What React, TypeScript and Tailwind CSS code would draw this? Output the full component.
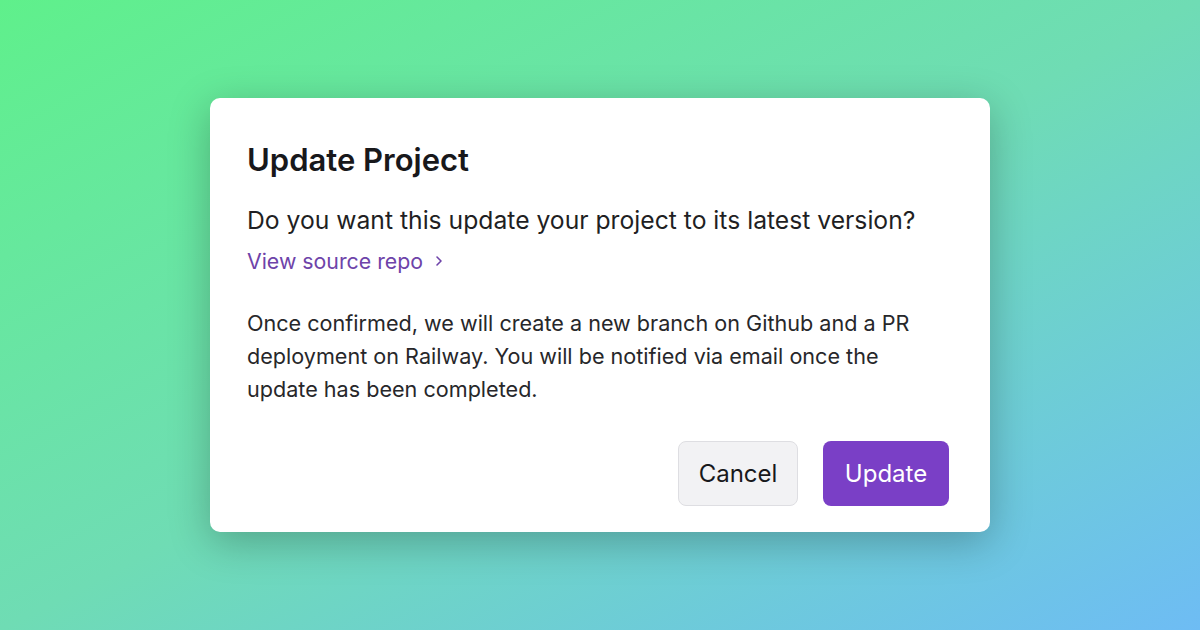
export default function App() {
  return (
    <div
      className="w-[1200px] h-[630px] flex items-center justify-center bg-gradient-to-br from-[#5ff08b] via-[#6fdcb4] to-[#6ebcf4]"
      style={{ fontFamily: "Inter, 'Noto Sans', sans-serif" }}
    >
      <div className="w-[780px] h-[434px] bg-white rounded-[10px] shadow-[0_10px_40px_rgba(0,0,0,0.25)] pl-[37px] pr-[41px] pt-[42px] pb-[26px] flex flex-col">
        <h1 className="text-[31px] leading-[40px] font-semibold text-[#18181b]">Update Project</h1>
        <p className="mt-[23px] text-[24.7px] leading-[34px] text-[#1f1f23]">
          Do you want this update your project to its latest version?
        </p>
        <a className="mt-[10px] flex items-center gap-[11px] text-[21.3px] leading-[28px] text-[#6e43a9]">
          View source repo
          <svg width="10" height="12" viewBox="0 0 10 12" fill="none">
            <path d="M3 2l4 4-4 4" stroke="#6e43a9" strokeWidth="1.6" strokeLinecap="round" strokeLinejoin="round" />
          </svg>
        </a>
        <p className="mt-[32px] text-[21.6px] leading-[33px] text-[#27272a] max-w-[690px]">
          Once confirmed, we will create a new branch on Github and a PR deployment on Railway. You will be notified via
          email once the update has been completed.
        </p>
        <div className="mt-auto flex justify-end gap-[25px]">
          <button className="w-[120px] h-[65px] rounded-[8px] bg-[#f2f2f4] border border-[#dedee2] text-[24px] text-[#18181b]">
            Cancel
          </button>
          <button className="w-[126px] h-[65px] rounded-[8px] bg-[#7a3fc6] text-[24px] text-white">Update</button>
        </div>
      </div>
    </div>
  );
}
